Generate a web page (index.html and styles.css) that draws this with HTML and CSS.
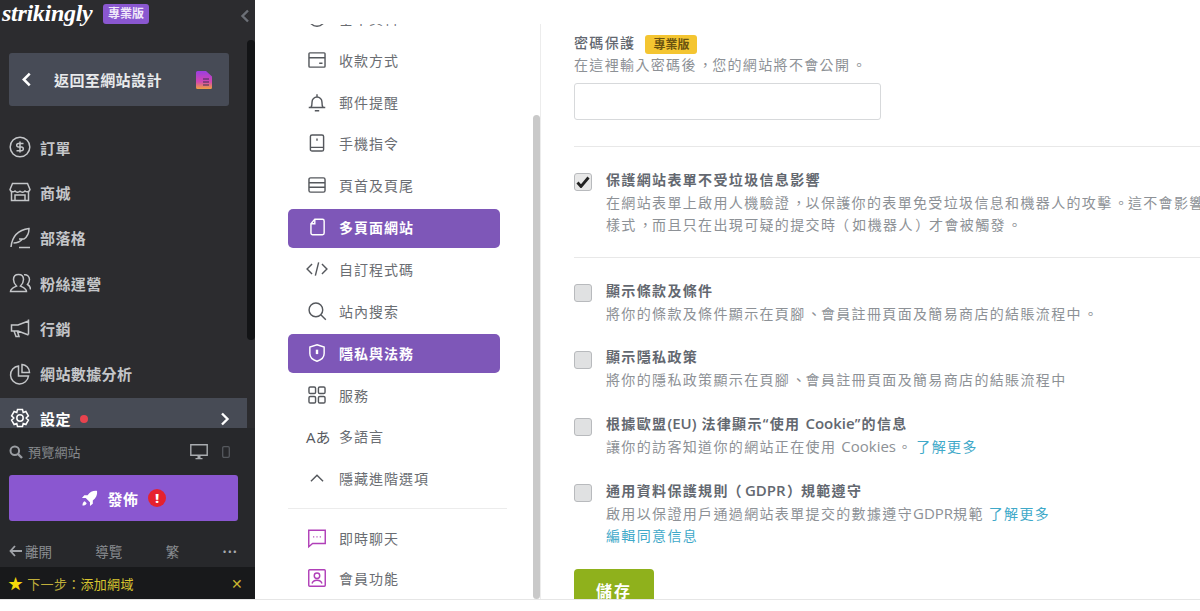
FILE: index.html
```html
<!DOCTYPE html>
<html lang="zh-Hant">
<head>
<meta charset="utf-8">
<title>隱私與法務</title>
<link rel="stylesheet" href="styles.css">
</head>
<body>
<div class="app">
  <aside class="side">
    <header class="head">
      <span class="logo">strikingly</span>
      <span class="pro">專業版</span>
      <svg class="collapse" viewBox="0 0 10 14"><path d="M8 1.500 2.500 7 8 12.500" fill="none" stroke="#6c7077" stroke-width="2.400"/></svg>
    </header>
    <a class="back">
      <svg class="back-arrow" viewBox="0 0 10 14"><path d="M8 1.500 2.500 7 8 12.500" fill="none" stroke="#fff" stroke-width="2.400"/></svg>
      <span class="back-text">返回至網站設計</span>
      <svg class="back-doc" viewBox="0 0 16 18"><defs><linearGradient id="dg" x1="0" y1="0" x2="0" y2="1"><stop offset="0" stop-color="#9a3ee0"/><stop offset=".6" stop-color="#d347b0"/><stop offset="1" stop-color="#f0a040"/></linearGradient></defs><path d="M0 1.500A1.500 1.500 0 0 1 1.500 0H10l6 5.500V16.500A1.500 1.500 0 0 1 14.500 18H1.500A1.500 1.500 0 0 1 0 16.500Z" fill="url(#dg)"/><path d="M7 8h6M7 11h6M7 14h6" stroke="#3b3050" stroke-width="1.200"/></svg>
    </a>
    <nav class="main-nav">
      <a class="mn"><svg class="mi" viewBox="0 0 22 22"><circle cx="11" cy="11" r="9.800"/><path d="M14.500 7.500H9.500a1.800 1.800 0 0 0 0 3.600h3a1.800 1.800 0 0 1 0 3.600H7.500M11 5.500v11"/></svg>訂單</a>
      <a class="mn"><svg class="mi" viewBox="0 0 22 22"><path d="M3.500 2.500h15l2.500 6a3 3 0 0 1-5 1.500 3.500 3.500 0 0 1-5 .3 3.500 3.500 0 0 1-5-.3 3 3 0 0 1-5-1.500Z"/><path d="M2.500 11v8.500h17V11M6 19.500V14h10v5.500"/></svg>商城</a>
      <a class="mn"><svg class="mi" viewBox="0 0 22 22"><path d="M2 20C3 10 9 3 20 1.500 20 7 18 10 15 12H10l3.500 0C11 15 8 16 4.500 16"/><path d="M10 20.500h11"/></svg>部落格</a>
      <a class="mn"><svg class="mi" viewBox="0 0 22 22"><path d="M1.500 19.500c0-3 3-4 6-5.500-2-2-3-4-3-6.500 0-3 2-5 5-5s5 2 5 5c0 2.500-1 4.500-3 6.500 3 1.500 6 2.500 6 5.500Z"/><path d="M15 2.800c3-.6 5.500 1.500 5.500 4.700 0 2-1 3.500-2 5 2 1 3 2.500 3 5"/></svg>粉絲運營</a>
      <a class="mn"><svg class="mi" viewBox="0 0 22 22"><path d="M19.500 2.500v15M19.500 4 9 8H2.500v6H9l10.500 4M5 14l2 5.500h3L8.300 14"/></svg>行銷</a>
      <a class="mn"><svg class="mi" viewBox="0 0 22 22"><path d="M9.500 3A9 9 0 1 0 19.500 13H9.500Z"/><path d="M13 1.500A8 8 0 0 1 20.500 9.500H13Z"/></svg>網站數據分析</a>
      <a class="mn mn-on"><svg class="mi" viewBox="0 0 22 22"><path d="M8.500 1.500h5l.7 3 2.700-1 2.500 4.300-2.200 2.200 2.200 2.200-2.500 4.300-2.700-1-.7 3h-5l-.7-3-2.700 1-2.500-4.300L4.800 10 2.600 7.800 5.100 3.500l2.700 1Z"/><circle cx="11" cy="10" r="3.200"/></svg>設定<span class="dot"></span><svg class="mn-chev" viewBox="0 0 10 14"><path d="M2 1.500 7.500 7 2 12.500" fill="none" stroke="#fff" stroke-width="2.400"/></svg></a>
    </nav>
    <div class="bottom">
      <div class="preview">
        <svg class="pv-search" viewBox="0 0 14 14"><circle cx="5.800" cy="5.800" r="4.300" fill="none" stroke="#9a9da2" stroke-width="2"/><path d="m9 9 4 4" stroke="#9a9da2" stroke-width="2.400"/></svg>
        <span class="pv-text">預覽網站</span>
        <svg class="pv-desk" viewBox="0 0 18 16"><path d="M.8.800h16.400v10.400H.8Z" fill="none" stroke="#a9acb0" stroke-width="1.400"/><path d="M7.500 11.500h3V14h2v1.200h-7V14h2Z" fill="#a9acb0"/></svg>
        <svg class="pv-phone" viewBox="0 0 8 12"><rect x=".7" y=".7" width="6.600" height="10.600" rx="1.200" fill="none" stroke="#55585d" stroke-width="1.300"/></svg>
      </div>
      <a class="publish">
        <svg class="rocket" viewBox="0 0 18 18"><path d="M17 1c-4-.5-7.500 1-10 4.500H3.500L1 8.500h4L9.500 13v4l3-2.500V11C16 8.500 17.500 5 17 1Z" fill="#fff"/><path d="M4 12c-1.500.5-2.500 2-2.500 4.500C4 16.500 5.500 15.500 6 14Z" fill="#fff"/></svg>
        <span>發佈</span>
        <span class="alert">!</span>
      </a>
      <div class="links">
        <span class="leave"><svg class="leave-arrow" viewBox="0 0 13 12"><path d="M6 1 1.500 6 6 11M2 6h11" fill="none" stroke="#a0a3a8" stroke-width="1.800"/></svg>離開</span>
        <span>導覽</span>
        <span>繁</span>
        <span class="dots">•••</span>
      </div>
      <div class="next">
        <span class="star">★</span>
        <span class="next-a">下一步：</span><span class="next-b">添加網域</span>
        <span class="x">✕</span>
      </div>
    </div>
    <div class="side-scroll"></div>
  </aside>

  <section class="mid">
    <div class="mid-list">
      <a class="it"><svg class="ii" viewBox="0 0 20 20"><circle cx="10" cy="10" r="7.500"/></svg>基本資料</a>
      <a class="it"><svg class="ii" viewBox="0 0 20 20"><rect x="2.700" y="3.500" width="14.600" height="13" rx=".8"/><path d="M2.700 8h14.600M12 13h3"/></svg>收款方式</a>
      <a class="it"><svg class="ii" viewBox="0 0 20 20"><path d="M2.500 15h15M4.500 15c1-1.500 1-3 1-5a4.500 4.500 0 0 1 9 0c0 2 0 3.500 1 5M10 3V5M8 18h4"/></svg>郵件提醒</a>
      <a class="it"><svg class="ii" viewBox="0 0 20 20"><rect x="4" y="2.700" width="12" height="14.600" rx="1.500"/><path d="M10 6v2M4 14h12"/></svg>手機指令</a>
      <a class="it"><svg class="ii" viewBox="0 0 20 20"><rect x="2.700" y="3.500" width="14.600" height="13" rx="1.500"/><path d="M2.700 8h14.600M2.700 12h14.600"/></svg>頁首及頁尾</a>
      <a class="it it-on"><svg class="ii" viewBox="0 0 20 20"><path d="M8 3h7a1.500 1.500 0 0 1 1.500 1.500v11A1.500 1.500 0 0 1 15 17H6a1.500 1.500 0 0 1-1.500-1.500V7Z"/><path d="M8 3v4H4.500"/></svg>多頁面網站</a>
      <a class="it"><svg class="ii" viewBox="0 0 20 20"><path d="M5.500 5.500 1 10l4.500 4.500M14.500 5.500 19 10l-4.500 4.500M11.500 4l-3 12"/></svg>自訂程式碼</a>
      <a class="it"><svg class="ii" viewBox="0 0 20 20"><circle cx="9" cy="9" r="6.200"/><path d="m13.500 13.500 4.500 4.500"/></svg>站內搜索</a>
      <a class="it it-on"><svg class="ii" viewBox="0 0 20 20"><path d="M10 2.500 16.500 4.500v6c0 3.500-3 6-6.500 7-3.500-1-6.500-3.500-6.500-7v-6Z"/><path d="M10 7v4" stroke-width="2.200"/></svg>隱私與法務</a>
      <a class="it"><svg class="ii" viewBox="0 0 20 20"><rect x="2.700" y="2.700" width="6" height="6" rx="1.200"/><rect x="11.300" y="2.700" width="6" height="6" rx="1.200"/><rect x="2.700" y="11.300" width="6" height="6" rx="1.200"/><rect x="11.300" y="11.300" width="6" height="6" rx="1.200"/></svg>服務</a>
      <a class="it"><span class="lang">Aあ</span>多語言</a>
      <a class="it"><svg class="ii" viewBox="0 0 20 20"><path d="m4.500 13 5.500-5.500 5.500 5.500"/></svg>隱藏進階選項</a>
      <hr class="mid-rule">
      <a class="it it-pink"><svg class="ii ii-pink" viewBox="0 0 20 20"><path d="M2.500 3h15v12H6l-3.500 3Z"/><path d="M6.500 9h1M9.500 9h1M12.500 9h1"/></svg>即時聊天</a>
      <a class="it it-pink"><svg class="ii ii-pink" viewBox="0 0 20 20"><rect x="2.500" y="2.500" width="15" height="15" rx=".8"/><circle cx="10" cy="8" r="2.500"/><path d="M5.500 15c.5-2 2.500-3 4.500-3s4 1 4.500 3"/></svg>會員功能</a>
    </div>
    <div class="mid-scroll"></div>
  </section>

  <main class="form">
    <div class="title-row"><span class="t">密碼保護</span><span class="gold">專業版</span></div>
    <p class="d">在這裡輸入密碼後<span class="pr">，</span>您的網站將不會公開<span class="pr">。</span></p>
    <input class="pw" type="text" aria-label="密碼">
    <hr class="rule rule-a">
    <div class="opt opt-first">
      <span class="cb cb-on"><svg class="tick" viewBox="0 0 14 12"><path d="M1.500 6.500 5 10.500 12.500 1.500" fill="none" stroke="#222" stroke-width="2.800"/></svg></span>
      <div>
        <div class="t">保護網站表單不受垃圾信息影響</div>
        <p class="d">在網站表單上啟用人機驗證<span class="pr">，</span>以保護你的表單免受垃圾信息和機器人的攻擊<span class="pr">。</span>這不會影響網站的<br>樣式<span class="pr">，</span>而且只在出現可疑的提交時<span class="pl">（</span>如機器人<span class="pr">）</span>才會被觸發<span class="pr">。</span></p>
      </div>
    </div>
    <hr class="rule rule-b">
    <div class="opt opt-after">
      <span class="cb"></span>
      <div>
        <div class="t">顯示條款及條件</div>
        <p class="d">將你的條款及條件顯示在頁腳<span class="pr">、</span>會員註冊頁面及簡易商店的結賬流程中<span class="pr">。</span></p>
      </div>
    </div>
    <div class="opt">
      <span class="cb"></span>
      <div>
        <div class="t">顯示隱私政策</div>
        <p class="d">將你的隱私政策顯示在頁腳<span class="pr">、</span>會員註冊頁面及簡易商店的結賬流程中</p>
      </div>
    </div>
    <div class="opt">
      <span class="cb"></span>
      <div>
        <div class="t">根據歐盟<span class="lat">(EU)</span> 法律顯示“使用 <span class="lat">Cookie</span>”的信息</div>
        <p class="d">讓你的訪客知道你的網站正在使用 <span class="lat">Cookies</span><span class="pr">。</span> <a class="lk">了解更多</a></p>
      </div>
    </div>
    <div class="opt">
      <span class="cb"></span>
      <div>
        <div class="t">通用資料保護規則<span class="pl">（</span><span class="lat">GDPR</span><span class="pr">）</span>規範遵守</div>
        <p class="d">啟用以保證用戶通過網站表單提交的數據遵守<span class="lat">GDPR</span>規範 <a class="lk">了解更多</a><br><a class="lk">編輯同意信息</a></p>
      </div>
    </div>
    <button class="save" type="button">儲存</button>
  </main>
</div>
</body>
</html>
```
FILE: styles.css
```css
* { box-sizing: border-box; }
html, body { margin: 0; height: 611px; overflow: hidden; background: #fff; }
body { font-family: "Open Sans", "Noto Sans CJK TC", sans-serif; }
a { text-decoration: none; color: inherit; }
p { margin: 0; }

.app { display: flex; height: 600px; border-bottom: 1px solid #e6e6e6; }

/* Dark sidebar */
.side { position: relative; width: 255px; flex: none; height: 599px; background: #2c2c2f; display: flex; flex-direction: column; color: #c4c6c9; }
.head { height: 53px; flex: none; display: flex; align-items: flex-start; padding: 0 0 0 2px; }
.logo { font-family: "Liberation Serif", serif; font-style: italic; font-weight: 700; font-size: 24px; line-height: 27px; color: #fff; letter-spacing: -.3px; width: 101px; }
.pro { width: 46px; height: 20px; margin-top: 4px; background: #8a57d0; color: #f0e8fa; border-radius: 3px; font-size: 12px; line-height: 20px; font-weight: 700; text-align: center; }
.collapse { width: 10px; height: 14px; margin: 9px 0 0 91px; }

.back { flex: none; height: 53px; width: 220px; margin-left: 9px; background: #474b56; border-radius: 3px; display: flex; align-items: center; padding-left: 12px; color: #e8e9eb; }
.back-arrow { width: 11px; height: 15px; }
.back-text { font-size: 15px; font-weight: 700; letter-spacing: .4px; margin-left: 22px; width: 142px; white-space: nowrap; }
.back-doc { width: 16px; height: 18px; }

.main-nav { flex: 1; margin-top: 18.500px; overflow: hidden; width: 247px; min-height: 0; }
.mn { display: flex; align-items: center; height: 45.300px; padding-left: 9px; font-size: 15px; font-weight: 700; letter-spacing: .4px; }
.mi { width: 22px; height: 22px; margin-right: 9px; fill: none; stroke: #c4c6c9; stroke-width: 1.500; flex: none; }
.mn-on { background: #474b55; color: #fff; margin-top: 1.700px; height: 42px; }
.mn-on .mi { stroke: #fff; }
.dot { width: 8px; height: 8px; border-radius: 50%; background: #e8434e; margin-left: 9px; }
.mn-chev { width: 10px; height: 14px; margin-left: auto; margin-right: 17px; }

.bottom { flex: none; height: 171px; background: #27282b; display: flex; flex-direction: column; }
.preview { height: 47px; flex: none; display: flex; align-items: center; padding-left: 9px; color: #85888c; font-size: 13px; }
.pv-search { width: 14px; height: 14px; margin-right: 5px; }
.pv-text { letter-spacing: .2px; width: 162px; }
.pv-desk { width: 18px; height: 16px; }
.pv-phone { width: 8px; height: 12px; margin-left: 14px; }
.publish { height: 46px; flex: none; width: 229px; margin-left: 9px; border-radius: 3px; background: #8a57d0; display: flex; align-items: center; justify-content: center; gap: 10px; color: #fff; font-size: 15px; font-weight: 700; letter-spacing: .4px; }
.rocket { width: 17px; height: 17px; }
.alert { width: 18px; height: 18px; border-radius: 50%; background: #e6212e; text-align: center; font-size: 13px; line-height: 18px; font-weight: 800; }
.links { flex: 1; display: flex; align-items: center; padding: 14px 17px 0 9px; font-size: 13.500px; color: #8a8d91; justify-content: space-between; }
.leave { display: flex; align-items: center; gap: 3px; }
.leave-arrow { width: 13px; height: 12px; }
.dots { font-size: 11px; letter-spacing: 1px; color: #a8abaf; }
.next { height: 32px; flex: none; background: #18191b; display: flex; align-items: center; padding: 0 12px 0 8px; font-size: 13px; letter-spacing: .3px; }
.star { color: #f5d90a; font-size: 15px; margin-right: 4px; line-height: 1; }
.next-a { color: #bfae3a; }
.next-b { color: #d9c62f; }
.x { margin-left: auto; color: #c9b52f; font-size: 14px; }
.side-scroll { position: absolute; left: 247px; top: 40px; width: 8px; height: 300px; background: #131416; border-radius: 4px; }

/* Middle column */
.mid { position: relative; width: 286px; flex: none; height: 575px; margin-top: 24px; padding-left: 33px; border-right: 1px solid #ececec; }
.mid-list { width: 219px; height: 575px; overflow: hidden; display: flex; flex-direction: column; }
.it { display: flex; flex: none; align-items: center; width: 212px; height: 40px; margin-bottom: 1.700px; border-radius: 5px; padding: 0 0 2px 18px; font-size: 14px; letter-spacing: 1px; color: #6a6d72; white-space: nowrap; }
.it:first-child { margin-top: -24.700px; }
.ii { width: 22px; height: 22px; margin-right: 11px; fill: none; stroke: #55585d; stroke-width: 1.300; flex: none; }
.lang { width: 33px; flex: none; font-size: 15px; letter-spacing: 0; color: #55585d; }
.it-on { background: #7e57b8; color: #fff; font-weight: 700; height: 39px; margin-top: 1px; margin-bottom: 2.200px; }
.it-on .ii { stroke: #fff; }
.mid-rule { flex: none; width: 219px; height: 1px; margin: 7px 0 10px; border: 0; background: #ececec; }
.it-pink { margin-bottom: 0; }
.ii-pink { stroke: #b03fb8; }
.mid-scroll { position: absolute; left: 278px; top: 91px; width: 7px; height: 484px; background: #c9c9c9; border-radius: 4px; }

/* Form column */
.form { flex: 1; min-width: 0; height: 599px; overflow: hidden; padding: 32px 0 0 33px; white-space: nowrap; font-size: 14px; letter-spacing: 1.350px; }
.title-row { display: flex; align-items: center; height: 22px; }
.t { font-size: 14px; line-height: 22px; font-weight: 600; color: #636870; }
.title-row .t { font-weight: 500; }
.d { font-size: 14px; line-height: 22px; color: #8d9196; }
.opt .d { margin-top: 1px; }
.pr { display: inline-block; letter-spacing: -.2px; padding-left: 1.550px; line-height: 1; }
.pl { display: inline-block; margin: 0 2px 0 -1.300px; line-height: 1; }
.lat { font-size: 15px; letter-spacing: 0; line-height: 0; }
.gold { margin: 2px 0 0 10px; height: 19px; width: 52px; border-radius: 3px; background: #f4c531; color: #6b5310; font-size: 12px; line-height: 19px; text-align: center; letter-spacing: 0; font-weight: 600; }
.pw { display: block; width: 307px; height: 37px; margin-top: 7px; border: 1px solid #d7d9db; border-radius: 3px; background: #fff; }
.rule { height: 1px; border: 0; background: #e8e8e8; margin: 0; width: 700px; }
.rule-a { margin-top: 26px; }
.rule-b { margin-top: 21px; }
.opt { display: flex; margin-top: 21.700px; gap: 14px; }
.opt-after { margin-top: 22px; }
.cb { width: 18px; height: 18px; margin-top: 4.500px; flex: none; border: 1px solid #b8babd; border-radius: 3px; background: #e0e1e2; display: flex; align-items: center; justify-content: center; }
.cb-on { background: #e8e8e8; }
.tick { width: 14px; height: 12px; }
.lk { color: #3fa9c9; }
.save { display: block; width: 80px; height: 44px; margin-top: 22px; border: 0; border-radius: 4px 4px 0 0; background: #8fb11c; color: #fff; font: 700 16px "Open Sans", "Noto Sans CJK TC", sans-serif; letter-spacing: 2px; padding: 0 0 2px; }
```
